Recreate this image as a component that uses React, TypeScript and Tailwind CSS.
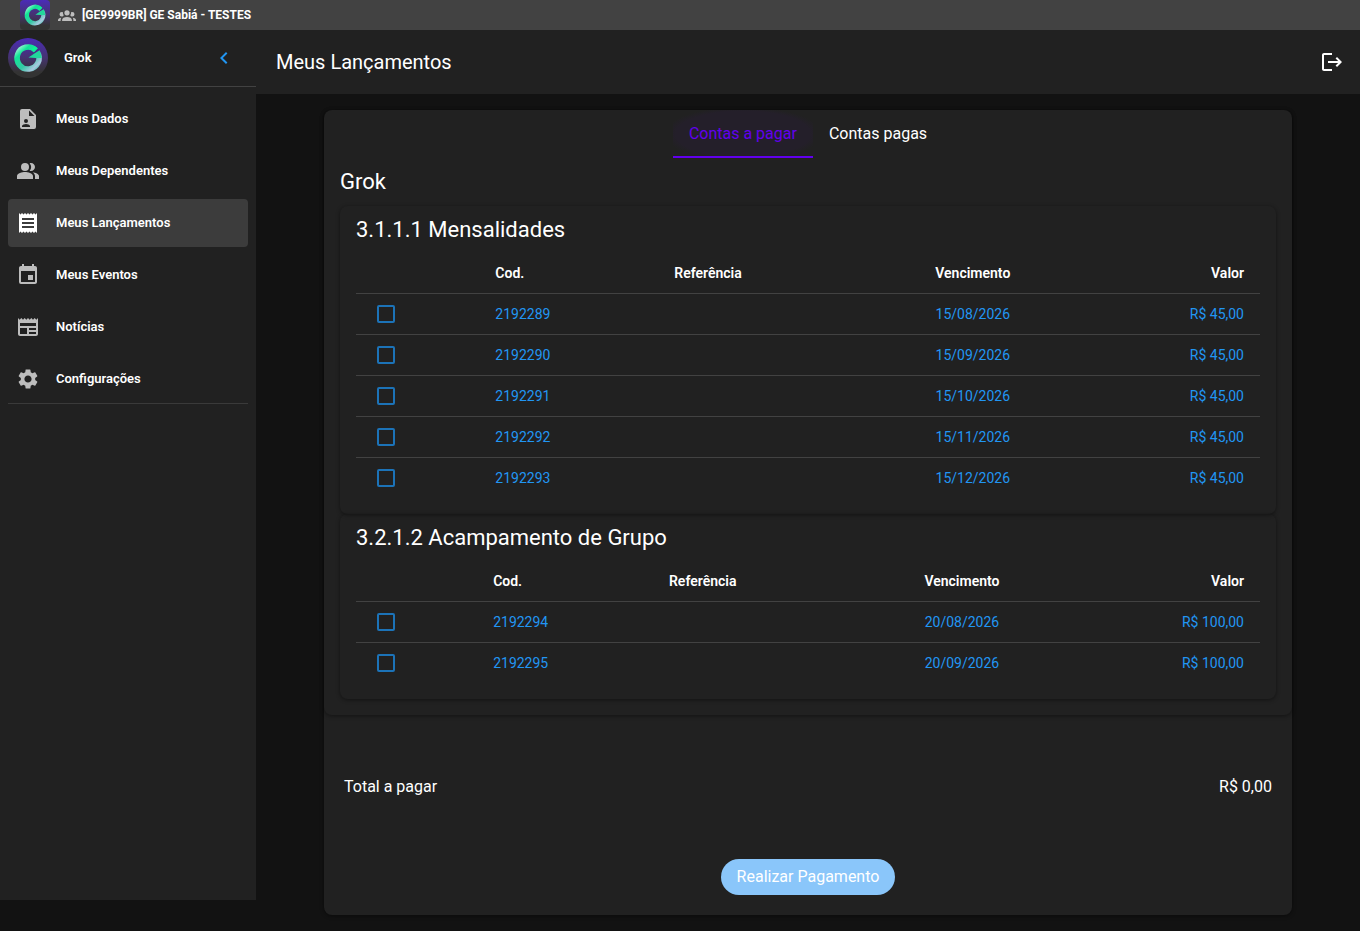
import type { ComponentType } from "react";
import {
  MdChevronLeft,
  MdEvent,
  MdLogout,
  MdNewspaper,
  MdPeopleAlt,
  MdReceipt,
  MdSettings,
} from "react-icons/md";

type IconProps = { size?: number; className?: string };
type NavItem = { label: string; icon: ComponentType<IconProps>; active?: boolean };
type Bill = { code: string; reference: string; due: string; value: string };
type Account = { title: string; bills: Bill[] };

function FileAccountIcon({ size = 24, className }: IconProps) {
  return (
    <svg viewBox="0 0 24 24" width={size} height={size} fill="currentColor" className={className} aria-hidden="true">
      <path
        fillRule="evenodd"
        d="M6 2a2 2 0 0 0-2 2v16a2 2 0 0 0 2 2h12a2 2 0 0 0 2-2V8l-6-6H6zm7 1.5L18.500 9H13V3.500zM10 12a2 2 0 1 1 0 4 2 2 0 0 1 0-4zm4 8H6v-1c0-1.330 2.670-2 4-2s4 .670 4 2v1z"
      />
    </svg>
  );
}

function AccountGroupIcon({ size = 24, className }: IconProps) {
  return (
    <svg viewBox="0 0 24 24" width={size} height={size} fill="currentColor" className={className} aria-hidden="true">
      <path d="M12 5.500A3.500 3.500 0 0 1 15.500 9 3.500 3.500 0 0 1 12 12.500 3.500 3.500 0 0 1 8.500 9 3.500 3.500 0 0 1 12 5.500M5 8c.56 0 1.080.15 1.530.42-.15 1.430.27 2.850 1.130 3.960C7.160 13.340 6.160 14 5 14a3 3 0 0 1-3-3 3 3 0 0 1 3-3m14 0a3 3 0 0 1 3 3 3 3 0 0 1-3 3c-1.160 0-2.160-.66-2.660-1.620.86-1.110 1.280-2.530 1.130-3.960C17.920 8.150 18.440 8 19 8M5.500 18.250c0-2.070 2.910-3.750 6.500-3.750s6.500 1.680 6.500 3.750V20h-13v-1.750M0 20v-1.500c0-1.390 1.890-2.560 4.450-2.900-.59.68-.95 1.620-.95 2.650V20H0m24 0h-3.500v-1.750c0-1.030-.36-1.970-.95-2.650 2.560.34 4.450 1.510 4.450 2.900V20z" />
    </svg>
  );
}

const NAV_ITEMS: NavItem[] = [
  { label: "Meus Dados", icon: FileAccountIcon },
  { label: "Meus Dependentes", icon: MdPeopleAlt },
  { label: "Meus Lançamentos", icon: MdReceipt, active: true },
  { label: "Meus Eventos", icon: MdEvent },
  { label: "Notícias", icon: MdNewspaper },
  { label: "Configurações", icon: MdSettings },
];

const ACCOUNTS: Account[] = [
  {
    title: "3.1.1.1 Mensalidades",
    bills: [
      { code: "2192289", reference: "", due: "15/08/2026", value: "R$ 45,00" },
      { code: "2192290", reference: "", due: "15/09/2026", value: "R$ 45,00" },
      { code: "2192291", reference: "", due: "15/10/2026", value: "R$ 45,00" },
      { code: "2192292", reference: "", due: "15/11/2026", value: "R$ 45,00" },
      { code: "2192293", reference: "", due: "15/12/2026", value: "R$ 45,00" },
    ],
  },
  {
    title: "3.2.1.2 Acampamento de Grupo",
    bills: [
      { code: "2192294", reference: "", due: "20/08/2026", value: "R$ 100,00" },
      { code: "2192295", reference: "", due: "20/09/2026", value: "R$ 100,00" },
    ],
  },
];

function Logo({ id, className }: { id: string; className: string }) {
  return (
    <svg viewBox="0 0 40 40" className={className} aria-hidden="true">
      <defs>
        <linearGradient id={`${id}-bg`} x1="0" y1="0" x2="0" y2="1">
          <stop offset="0" stopColor="#4b2bb8" />
          <stop offset="0.5" stopColor="#45336f" />
          <stop offset="0.85" stopColor="#333333" />
        </linearGradient>
        <linearGradient id={`${id}-ring`} gradientUnits="userSpaceOnUse" x1="9" y1="8" x2="31" y2="32">
          <stop offset="0" stopColor="#c8f5e6" />
          <stop offset="0.25" stopColor="#10e696" />
          <stop offset="0.6" stopColor="#35c9a5" />
          <stop offset="0.85" stopColor="#a9c8e0" />
          <stop offset="1" stopColor="#35c9a5" />
        </linearGradient>
      </defs>
      <rect width="40" height="40" fill={`url(#${id}-bg)`} />
      <path
        d="M27.8 12.2A11 11 0 1 0 29.4 14.2"
        fill="none"
        stroke={`url(#${id}-ring)`}
        strokeWidth="5.6"
      />
      <path d="M26.5 8L29.7 10.300L25.800 14.200L23 12Z" fill="#0cf296" />
      <path d="M31.600 12.300L33.800 20H27.500L20.500 19.600L26 15.800Z" fill="#22d79c" />
    </svg>
  );
}

function Sidebar() {
  return (
    <aside className="flex h-[calc(100vh-61px)] w-64 shrink-0 flex-col bg-[#212121]">
      <div className="box-content flex h-14 items-center border-b border-[#424242] pr-5 pl-2">
        <Logo id="user" className="size-10 rounded-full" />
        <span className="ml-4 flex-1 text-[13px] font-semibold">Grok</span>
        <button type="button" aria-label="Recolher menu" className="text-[#2196f3]">
          <MdChevronLeft size={24} />
        </button>
      </div>
      <nav className="mx-2 flex flex-col gap-1 border-b border-[#3a3a3a] pt-2">
        {NAV_ITEMS.map(({ label, icon: Icon, active }) => (
          <a
            key={label}
            href="#"
            aria-current={active ? "page" : undefined}
            className={`flex h-12 items-center gap-4 rounded px-2 text-[13px] font-semibold ${
              active ? "bg-[#3c3c3c]" : ""
            }`}
          >
            <Icon size={24} className={active ? "text-white" : "text-[#bdbdbd]"} />
            {label}
          </a>
        ))}
      </nav>
    </aside>
  );
}

function AccountCard({ title, bills }: Account) {
  return (
    <section className="rounded-lg px-4 pb-4 shadow-[0_1px_4px_rgba(0,0,0,0.45)]">
      <h3 className="flex h-[47px] items-center pb-px text-[22px]">{title}</h3>
      <table className="w-full text-sm">
        <thead>
          <tr className="h-10 border-b border-[#424242]">
            <th className="px-4" />
            <th className="px-4 text-left font-semibold">Cod.</th>
            <th className="px-4 text-left font-semibold">Referência</th>
            <th className="px-4 text-center font-semibold">Vencimento</th>
            <th className="px-4 text-right font-semibold">Valor</th>
          </tr>
        </thead>
        <tbody className="text-[#2196f3]">
          {bills.map((bill) => (
            <tr key={bill.code} className="h-[41px] border-b border-[#424242] last:border-b-0">
              <td className="px-4">
                <input
                  type="checkbox"
                  aria-label={`Selecionar ${bill.code}`}
                  className="mx-[5px] block size-[18px] appearance-none rounded-xs border-2 border-[#1c73b8] checked:bg-[#1c73b8]"
                />
              </td>
              <td className="px-4">{bill.code}</td>
              <td className="px-4">{bill.reference}</td>
              <td className="px-4 text-center whitespace-nowrap">{bill.due}</td>
              <td className="px-4 text-right whitespace-nowrap">{bill.value}</td>
            </tr>
          ))}
        </tbody>
      </table>
    </section>
  );
}

export default function App() {
  return (
    <div className="min-h-screen bg-[#121212] font-['Roboto',sans-serif] text-white">
      <div className="flex h-[30px] items-center bg-[#424242] px-5">
        <Logo id="group" className="size-[30px] rounded" />
        <AccountGroupIcon size={18} className="ml-2 text-[#bdbdbd]" />
        <span className="ml-1.5 text-xs leading-4 font-bold">[GE9999BR] GE Sabiá - TESTES</span>
      </div>

      <div className="flex items-start">
        <Sidebar />

        <div className="min-w-0 flex-1">
          <header className="flex h-16 items-center justify-between bg-[#212121] pr-4 pl-5">
            <h1 className="text-xl">Meus Lançamentos</h1>
            <button type="button" aria-label="Sair">
              <MdLogout size={24} />
            </button>
          </header>

          <main className="mx-auto max-w-[1000px] p-4">
            <div className="rounded-lg bg-[#212121] shadow-[0_1px_4px_rgba(0,0,0,0.45)]">
              <div className="rounded-lg px-4 pb-4 shadow-[0_1px_4px_rgba(0,0,0,0.45)]">
                <div role="tablist" className="flex h-12 justify-center">
                  <button
                    type="button"
                    role="tab"
                    aria-selected="true"
                    className="bg-[radial-gradient(ellipse_at_center,#241f2a_68%,#212121_80%)] px-4 text-[#6200ee] shadow-[inset_0_-2px_#6200ee]"
                  >
                    Contas a pagar
                  </button>
                  <button type="button" role="tab" aria-selected="false" className="px-4">
                    Contas pagas
                  </button>
                </div>
                <h2 className="flex h-12 items-center pb-0.5 text-[22px]">Grok</h2>
                {ACCOUNTS.map((account) => (
                  <AccountCard key={account.title} {...account} />
                ))}
              </div>

              <div className="flex flex-col items-center gap-[60px] px-5 pt-[60px] pb-5">
                <div className="flex w-full justify-between">
                  <span>Total a pagar</span>
                  <span>R$ 0,00</span>
                </div>
                <button type="button" className="h-9 rounded-full bg-[#8ac6fa] px-4 text-white">
                  Realizar Pagamento
                </button>
              </div>
            </div>
          </main>
        </div>
      </div>
    </div>
  );
}
